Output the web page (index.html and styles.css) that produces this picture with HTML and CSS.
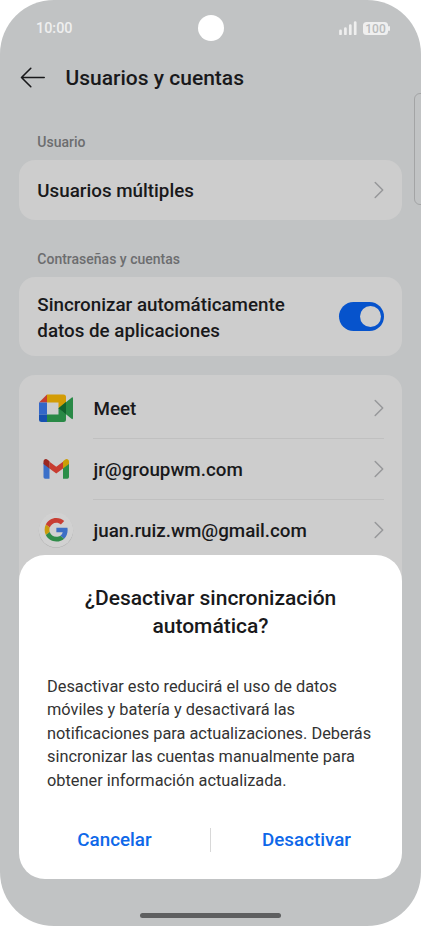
FILE: index.html
```html
<!DOCTYPE html>
<html lang="es">
<head>
<meta charset="utf-8">
<title>Usuarios y cuentas</title>
<link rel="stylesheet" href="styles.css">
</head>
<body>
<div class="phone">
  <header class="status">
    <span class="time">10:00</span>
    <span class="camera"></span>
    <div class="indicators">
      <svg class="signal" width="18" height="14" viewBox="0 0 18 14"><path d="M1.5 9.8V13M6.4 7.500V13M11.300 4.500V13M16.200 1.500V13" stroke="#efefef" stroke-width="2.700" stroke-linecap="round"/></svg>
      <span class="battery">100</span>
    </div>
  </header>
  <div class="edge-panel"></div>
  <div class="titlebar">
    <svg width="26" height="22" viewBox="0 0 26 22" fill="none" stroke="#19191b" stroke-width="1.6" stroke-linecap="round" stroke-linejoin="round"><path d="M24.2 10.500H1.500M10.800 1.300L1.500 10.500l9.300 9.200"/></svg>
    <h1>Usuarios y cuentas</h1>
  </div>
  <main>
    <h2 class="label">Usuario</h2>
    <section class="card single">
      <span class="text">Usuarios múltiples</span>
      <svg class="chevron" width="10" height="18" viewBox="0 0 10 18"><path d="M1.2 1.5L8.7 9 1.2 16.5"/></svg>
    </section>
    <h2 class="label second">Contraseñas y cuentas</h2>
    <section class="card sync">
      <span class="text">Sincronizar automáticamente<br>datos de aplicaciones</span>
      <span class="toggle"></span>
    </section>
    <section class="card accounts">
      <div class="account">
        <svg class="icon" width="36" height="36" viewBox="0 0 36 36">
          <path d="M1 12.5L9 4.5v8z" fill="#c43d32"/>
          <path d="M1 12.5h8v12H1z" fill="#3367c9"/>
          <path d="M1 24.5h8V32H3.5Q1 32 1 29.5z" fill="#1650b0"/>
          <path d="M9 4.5h16.5Q28 4.5 28 7v7l-7.5 4.5v-6H9z" fill="#d39c05"/>
          <path d="M9 24.5h11.500v-6.500L28 24v5.500Q28 32 25.500 32H9z" fill="#298946"/>
          <path d="M20.500 18.200L33.500 7.700Q35 6.700 35 8.500v19.500Q35 29.900 33.500 28.700z" fill="#298946"/>
          <path d="M20.500 18.200L28 12v12.300z" fill="#12632d"/>
        </svg>
        <span class="text">Meet</span>
        <svg class="chevron" width="10" height="18" viewBox="0 0 10 18"><path d="M1.2 1.5L8.7 9 1.2 16.500"/></svg>
      </div>
      <div class="account">
        <svg class="icon" width="36" height="36" viewBox="0 0 36 36">
          <path d="M5.500 11.500l6 4.500v11.700H7.200q-1.700 0-1.700-1.700z" fill="#3b70c9"/>
          <path d="M31 11.500L25 16v11.700h4.300q1.700 0 1.700-1.700z" fill="#2b8e49"/>
          <path d="M11.500 10.700l6.750 5 6.750-5v6.800l-6.750 5-6.750-5z" fill="#c83c30"/>
          <path d="M5.500 13v-2.300c0-2.400 2.300-3.300 4.100-2l1.900 1.500v7.300z" fill="#9b2821"/>
          <path d="M31 13v-2.300c0-2.400-2.300-3.300-4.100-2L25 10.200v7.300z" fill="#cc9e08"/>
        </svg>
        <span class="text">jr@groupwm.com</span>
        <svg class="chevron" width="10" height="18" viewBox="0 0 10 18"><path d="M1.200 1.500L8.700 9 1.200 16.500"/></svg>
      </div>
      <div class="account">
        <svg class="icon" width="36" height="36" viewBox="0 0 36 36">
          <circle cx="18" cy="18.600" r="17.200" fill="#b0b0b0"/>
          <circle cx="18" cy="18" r="17.200" fill="#d1d1d1"/>
          <g transform="translate(6.600 6) scale(.49)">
            <path fill="#c83e33" d="M24 9.500c3.540 0 6.710 1.220 9.210 3.600l6.850-6.850C35.900 2.380 30.470 0 24 0 14.620 0 6.510 5.380 2.560 13.220l7.980 6.190C12.430 13.720 17.740 9.500 24 9.500z"/>
            <path fill="#3d6fc5" d="M46.980 24.550c0-1.570-.15-3.090-.38-4.550H24v9.020h12.940c-.58 2.960-2.260 5.480-4.780 7.180l7.730 6c4.510-4.180 7.090-10.360 7.090-17.650z"/>
            <path fill="#cb9c0c" d="M10.530 28.590A14.500 14.500 0 0 1 9.770 24c0-1.600.27-3.140.76-4.590l-7.980-6.190A23.900 23.900 0 0 0 0 24c0 3.880.92 7.540 2.560 10.780z"/>
            <path fill="#308c49" d="M24 48c6.480 0 11.930-2.130 15.890-5.810l-7.730-6c-2.150 1.450-4.920 2.300-8.160 2.300-6.260 0-11.570-4.220-13.470-9.910l-7.980 6.190C6.510 42.620 14.620 48 24 48z"/>
          </g>
        </svg>
        <span class="text">juan.ruiz.wm@gmail.com</span>
        <svg class="chevron" width="10" height="18" viewBox="0 0 10 18"><path d="M1.200 1.500L8.700 9 1.200 16.500"/></svg>
      </div>
    </section>
  </main>
  <div class="dialog" role="dialog">
    <h2>¿Desactivar sincronización<br>automática?</h2>
    <p>Desactivar esto reducirá el uso de datos<br>móviles y batería y desactivará las<br>notificaciones para actualizaciones. Deberás<br>sincronizar las cuentas manualmente para<br>obtener información actualizada.</p>
    <div class="actions">
      <button>Cancelar</button>
      <span class="divider"></span>
      <button>Desactivar</button>
    </div>
  </div>
  <div class="home"></div>
</div>
</body>
</html>
```
FILE: styles.css
```css
* { box-sizing: border-box; }
body { margin: 0; background: #fff; font-family: Roboto, sans-serif; color: #19191b; }
h1, h2, p { margin: 0; font-weight: 500; }
.phone { position: relative; width: 421px; height: 926px; border-radius: 54px; background: #c1c3c4; overflow: hidden; }
.status { display: grid; grid-template-columns: 1fr 26px 1fr; align-items: center; height: 56px; padding: 0 31px 0 36px; }
.time { font-size: 14.4px; font-weight: 500; color: #efefef; }
.camera { width: 26px; height: 26px; border-radius: 50%; background: #fff; margin-left: -2.5px; }
.indicators { display: flex; justify-content: flex-end; gap: 6px; align-items: center; }
.battery { position: relative; width: 25px; height: 13px; margin-right: 2px; border-radius: 3.5px; background: #efefef; color: #b9bbbc; font-size: 12px; font-weight: 500; line-height: 14px; text-align: center; }
.battery::after { content: ""; position: absolute; right: -1.5px; top: 4px; width: 2px; height: 5px; border-radius: 1px; background: #efefef; }
.edge-panel { position: absolute; left: 414px; top: 93px; width: 14px; height: 112px; border: 1px solid #a3a4a5; border-radius: 6px; }
.titlebar { display: flex; align-items: center; gap: 19.5px; height: 44px; padding-left: 20px; }
h1 { font-size: 21px; line-height: 28px; }
main { padding: 32px 19px 0; }
.label { padding-left: 18.3px; font-size: 14px; line-height: 20px; color: #6c6d6f; }
.label.second { margin-top: 29px; }
.card { margin-top: 8px; border-radius: 16px; background: #cdcdcd; }
.text { flex: 1; font-size: 18.8px; line-height: 26px; font-weight: 500; }
.single, .sync { display: flex; align-items: center; padding: 0 18px 0 18.3px; }
.single { height: 60px; }
.single .text { padding-top: 1px; }
.sync { height: 79px; }
.sync .text { padding-top: 3px; }
.chevron { fill: none; stroke: #97989a; stroke-width: 1.5; stroke-linecap: round; stroke-linejoin: round; }
.toggle { display: flex; justify-content: flex-end; width: 45px; height: 29px; padding: 4px 3.5px; border-radius: 15px; background: #0653cc; }
.toggle::after { content: ""; width: 21px; height: 21px; border-radius: 50%; background: #cdcdcd; }
.accounts { margin-top: 19px; height: 300px; padding: 3px 18px 0 19px; }
.account { display: flex; align-items: center; height: 61px; position: relative; }
.account + .account::before { content: ""; position: absolute; left: 55px; right: 0; top: -1px; height: 1px; background: #c0c0c0; }
.account svg { margin-bottom: 2px; }
.icon { margin-right: 19.5px; }
.dialog { position: absolute; left: 19px; top: 555px; width: 383px; height: 324px; padding: 30px 28px 0; border-radius: 26px; background: #fff; }
.dialog h2 { font-size: 21px; line-height: 27.5px; text-align: center; white-space: nowrap; }
.dialog p { margin-top: 34.5px; font-size: 16.35px; line-height: 23.5px; font-weight: 400; color: #333; white-space: nowrap; }
.actions { display: grid; grid-template-columns: 1fr 1px 1fr; align-items: center; height: 30px; margin: 32.5px -28px 0; }
.actions button { border: 0; padding: 0; background: none; font: 500 18.8px Roboto, sans-serif; color: #0e68e9; }
.divider { height: 24px; background: #d8d8d8; }
.home { position: absolute; left: 140px; top: 913px; width: 141px; height: 5px; border-radius: 3px; background: #5e5f60; }
```
